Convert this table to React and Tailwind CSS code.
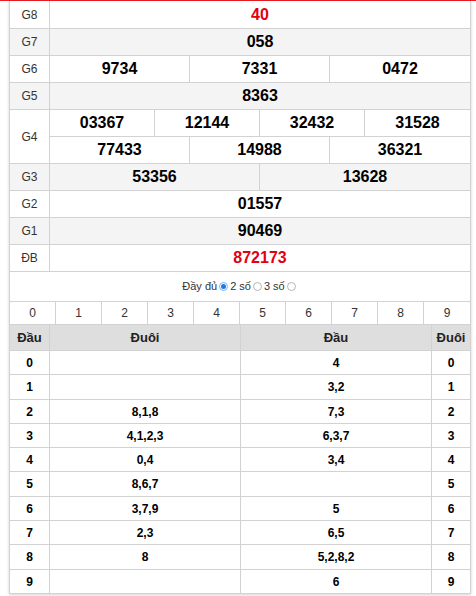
import React from 'react'

const prizes = [
  { label: 'G8', rows: [['40']], red: true, h: 'h-[27px]' },
  { label: 'G7', rows: [['058']], gray: true },
  { label: 'G6', rows: [['9734', '7331', '0472']] },
  { label: 'G5', rows: [['8363']], gray: true },
  { label: 'G4', rows: [['03367', '12144', '32432', '31528'], ['77433', '14988', '36321']] },
  { label: 'G3', rows: [['53356', '13628']], gray: true },
  { label: 'G2', rows: [['01557']] },
  { label: 'G1', rows: [['90469']], gray: true },
  { label: 'ĐB', rows: [['872173']], red: true },
]

const cols = {
  1: 'grid-cols-1',
  2: 'grid-cols-2',
  3: 'grid-cols-3',
  4: 'grid-cols-4',
}

const loto = [
  ['', '4'],
  ['', '3,2'],
  ['8,1,8', '7,3'],
  ['4,1,2,3', '6,3,7'],
  ['0,4', '3,4'],
  ['8,6,7', ''],
  ['3,7,9', '5'],
  ['2,3', '6,5'],
  ['8', '5,2,8,2'],
  ['', '6'],
]
const rowH = ['h-[24px]', 'h-[25px]', 'h-[24px]', 'h-[24px]', 'h-[24px]', 'h-[25px]', 'h-[24px]', 'h-[24px]', 'h-[25px]', 'h-[24px]']

const Radio = ({ on }) => (
  <span className={`inline-flex items-center justify-center w-[9px] h-[9px] rounded-full border ${on ? 'border-[#7fb2ee]' : 'border-[#b5b5b5]'} bg-white mx-[2px]`}>
    {on && <span className="w-[5px] h-[5px] rounded-full bg-[#1f78e4]" />}
  </span>
)

export default function App() {
  return (
    <div className="w-[476px] h-[596px] bg-white font-['Liberation_Sans',Arial,sans-serif] text-black overflow-hidden">
      <div className="h-[1px] bg-[#ec1c24]" />
      <div className="ml-[9px] w-[462px] border-x border-[#d2d2d2] shadow-[0_1px_3px_rgba(0,0,0,0.18)]">
        {/* ── KẾT QUẢ ── */}
        {prizes.map((p) => (
          <div key={p.label} className={`flex border-b border-[#d2d2d2] ${p.gray ? 'bg-[#f4f4f4]' : 'bg-white'}`}>
            <div className="w-[40px] shrink-0 border-r border-[#d2d2d2] flex items-center justify-center text-[12px] text-[#333]">
              {p.label}
            </div>
            <div className="flex-1 flex flex-col">
              {p.rows.map((r, i) => {
                const last = i === p.rows.length - 1
                return (
                  <div
                    key={i}
                    className={`grid ${cols[r.length]} divide-x divide-[#d2d2d2] ${last ? p.h || 'h-[26px]' : 'h-[27px] border-b border-[#d2d2d2]'}`}
                  >
                    {r.map((n) => (
                      <div key={n} className={`flex items-center justify-center text-[16px] font-bold ${p.red ? 'text-[#e3000f]' : 'text-black'}`}>
                        {n}
                      </div>
                    ))}
                  </div>
                )
              })}
            </div>
          </div>
        ))}

        {/* ── CHỌN SỐ ── */}
        <div className="h-[30px] border-b border-[#d2d2d2] flex items-center justify-center text-[11px] text-[#333]">
          <span>Đầy đủ</span>
          <Radio on />
          <span>2 số</span>
          <Radio />
          <span>3 số</span>
          <Radio />
        </div>

        <div className="grid grid-cols-10 divide-x divide-[#d2d2d2] h-[23px] border-b border-[#d2d2d2] text-[12px] text-[#333]">
          {[0, 1, 2, 3, 4, 5, 6, 7, 8, 9].map((d) => (
            <div key={d} className="flex items-center justify-center">{d}</div>
          ))}
        </div>

        {/* ── LOTO ── */}
        <div className="grid grid-cols-[40px_191px_191px_1fr] divide-x divide-[#d2d2d2] h-[26px] border-b border-[#d2d2d2] bg-[#dedede] text-[13px] font-bold text-[#222]">
          <div className="flex items-center justify-center">Đầu</div>
          <div className="flex items-center justify-center">Đuôi</div>
          <div className="flex items-center justify-center">Đầu</div>
          <div className="flex items-center justify-center">Đuôi</div>
        </div>
        {loto.map((r, i) => (
          <div key={i} className={`grid grid-cols-[40px_191px_191px_1fr] divide-x divide-[#d2d2d2] ${rowH[i]} border-b border-[#d2d2d2] text-[12px] font-bold`}>
            <div className="flex items-center justify-center">{i}</div>
            <div className="flex items-center justify-center">{r[0]}</div>
            <div className="flex items-center justify-center">{r[1]}</div>
            <div className="flex items-center justify-center">{i}</div>
          </div>
        ))}
      </div>
    </div>
  )
}
